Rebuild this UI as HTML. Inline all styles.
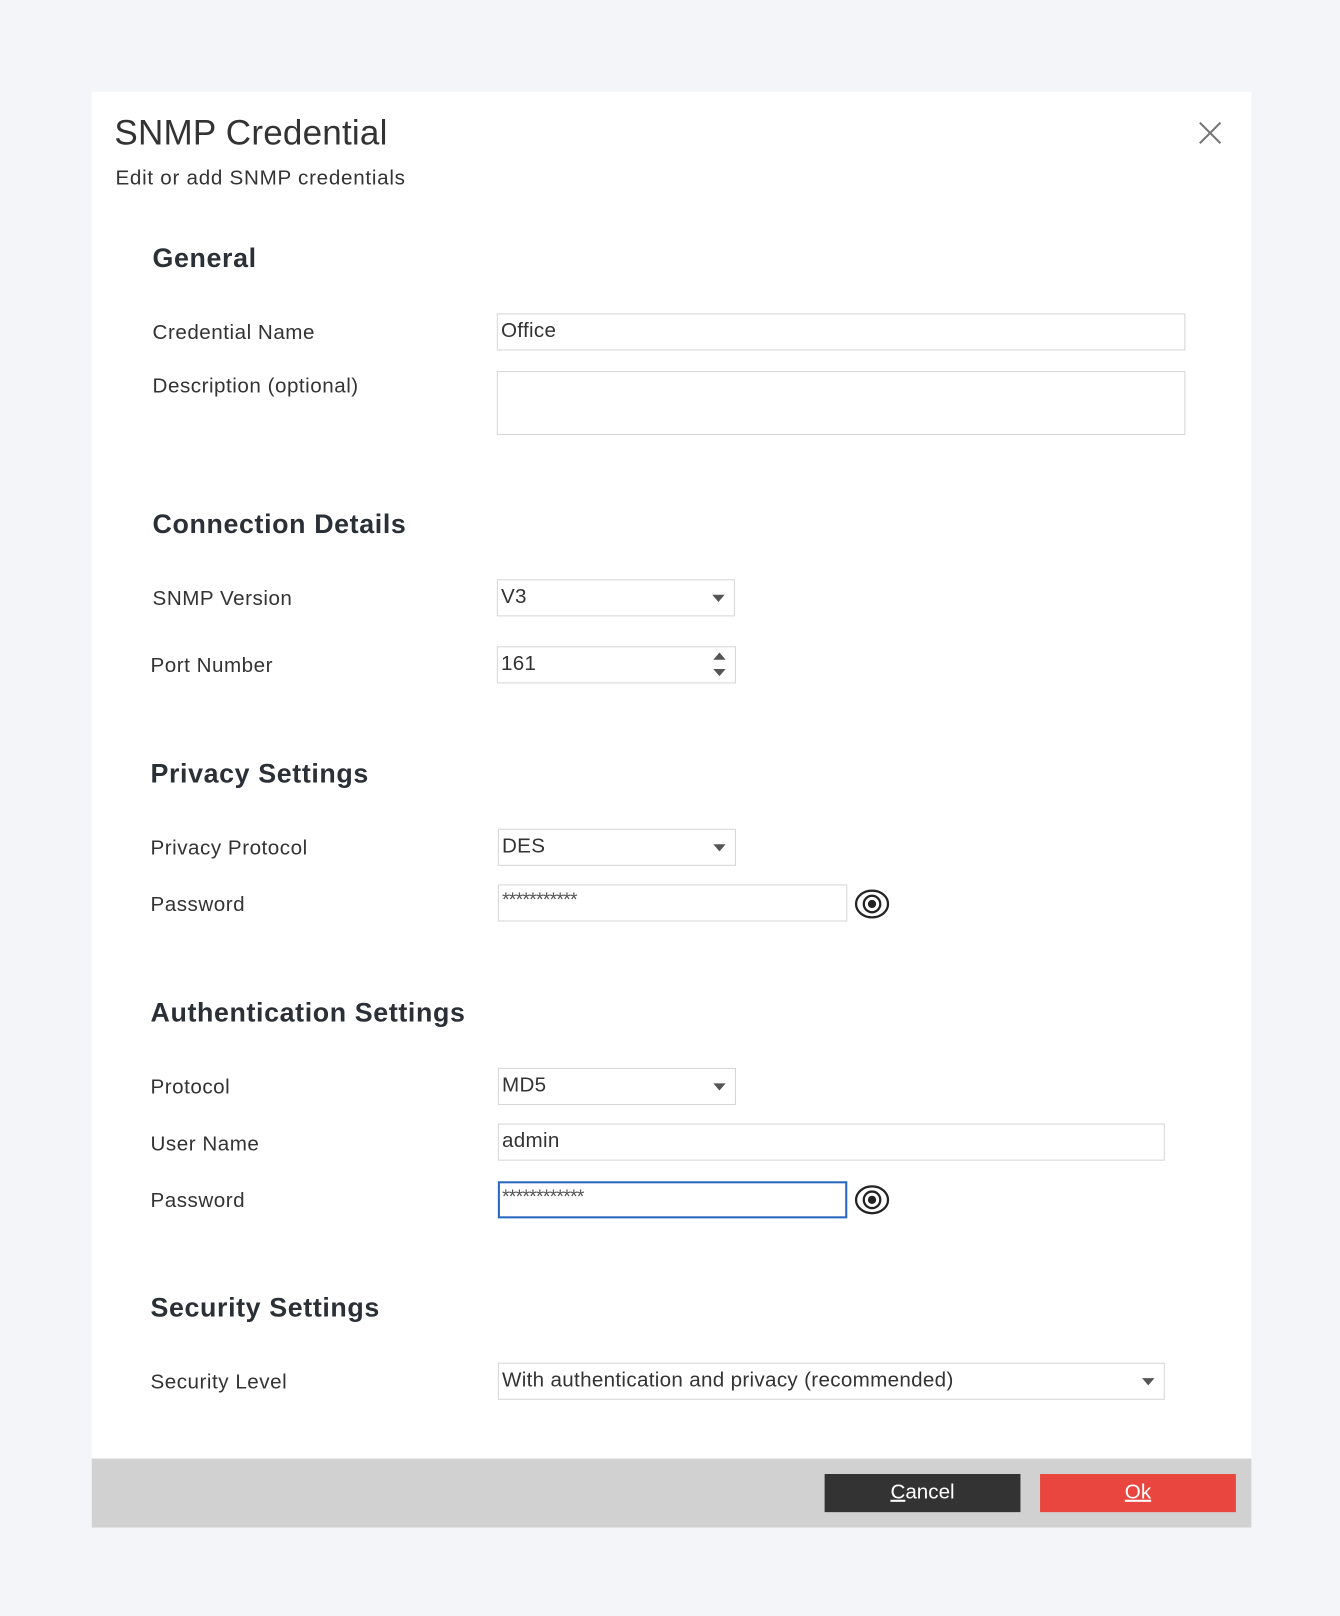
<!DOCTYPE html>
<html><head><meta charset="utf-8"><style>
html,body{margin:0;padding:0;background:#f4f5f9;width:1340px;height:1616px;overflow:hidden}
#w{position:absolute;left:0;top:0;width:1300px;height:1568px;transform:scale(1.03077);transform-origin:0 0;font-family:"Liberation Sans",sans-serif;color:#333}
.a{position:absolute;white-space:nowrap}
.dlg{left:89px;top:89px;width:1125px;height:1393px;background:#fff}
.foot{left:89px;top:1415px;width:1125px;height:67px;background:#d1d1d1}
.h{font-weight:bold;font-size:26px;color:#2b2f36;line-height:30px;letter-spacing:0.6px}
.l{font-size:20px;line-height:24px;color:#333;letter-spacing:0.5px}
.i{border:1px solid #d6d6d6;box-sizing:border-box;background:#fff;font-size:20px;line-height:32px;padding-left:3px;color:#333;letter-spacing:0.3px}
.arr{position:absolute;right:9px;top:14px;width:0;height:0;border-left:6px solid transparent;border-right:6px solid transparent;border-top:7px solid #555}
.pw{font-size:19px;line-height:30px;letter-spacing:-0.8px;color:#555}
.btn{height:37px;top:1430px;width:190px;color:#fff;font-size:20px;line-height:37px;text-align:center}
</style></head><body><div id="w">
<div class="a dlg"></div>
<div class="a foot"></div>
<div class="a" style="left:111px;top:109px;font-size:34px;line-height:40px;color:#333;letter-spacing:0.2px">SNMP Credential</div>
<div class="a" style="left:112px;top:161px;font-size:20px;line-height:24px;color:#333;letter-spacing:0.7px">Edit or add SNMP credentials</div>
<svg class="a" style="left:1163px;top:118px" width="22" height="22"><path d="M1 1L21 21M21 1L1 21" stroke="#777" stroke-width="2"/></svg>

<div class="a h" style="left:148px;top:235px">General</div>
<div class="a l" style="left:148px;top:311px">Credential Name</div>
<div class="a l" style="left:148px;top:363px">Description (optional)</div>
<div class="a i" style="left:482px;top:304px;width:668px;height:36px">Office</div>
<div class="a i" style="left:482px;top:360px;width:668px;height:62px"></div>

<div class="a h" style="left:148px;top:493px">Connection Details</div>
<div class="a l" style="left:148px;top:569px">SNMP Version</div>
<div class="a l" style="left:146px;top:634px">Port Number</div>
<div class="a i" style="left:482px;top:562px;width:231px;height:36px">V3<div class="arr"></div></div>
<div class="a i" style="left:482px;top:627px;width:232px;height:36px">161
<div style="position:absolute;right:9px;top:5px;border-left:6px solid transparent;border-right:6px solid transparent;border-bottom:7px solid #555"></div>
<div style="position:absolute;right:9px;top:21px;border-left:6px solid transparent;border-right:6px solid transparent;border-top:7px solid #555"></div></div>

<div class="a h" style="left:146px;top:735px">Privacy Settings</div>
<div class="a l" style="left:146px;top:811px">Privacy Protocol</div>
<div class="a l" style="left:146px;top:866px">Password</div>
<div class="a i" style="left:483px;top:804px;width:231px;height:36px">DES<div class="arr"></div></div>
<div class="a i pw" style="left:483px;top:858px;width:339px;height:36px">***********</div>
<svg class="a" style="left:828px;top:861px" width="36" height="32" viewBox="0 0 36 32"><ellipse cx="18" cy="16" rx="15.5" ry="13" fill="none" stroke="#222" stroke-width="2.2"/><circle cx="18" cy="16" r="8" fill="none" stroke="#222" stroke-width="2.2"/><circle cx="18" cy="16" r="4" fill="#222"/></svg>

<div class="a h" style="left:146px;top:967px">Authentication Settings</div>
<div class="a l" style="left:146px;top:1043px">Protocol</div>
<div class="a l" style="left:146px;top:1098px">User Name</div>
<div class="a l" style="left:146px;top:1153px">Password</div>
<div class="a i" style="left:483px;top:1036px;width:231px;height:36px">MD5<div class="arr"></div></div>
<div class="a i" style="left:483px;top:1090px;width:647px;height:36px">admin</div>
<div class="a i pw" style="left:483px;top:1146px;width:339px;height:36px;border:2px solid #2a68c0;padding-left:2px;line-height:28px">************</div>
<svg class="a" style="left:828px;top:1148px" width="36" height="32" viewBox="0 0 36 32"><ellipse cx="18" cy="16" rx="15.5" ry="13" fill="none" stroke="#222" stroke-width="2.2"/><circle cx="18" cy="16" r="8" fill="none" stroke="#222" stroke-width="2.2"/><circle cx="18" cy="16" r="4" fill="#222"/></svg>

<div class="a h" style="left:146px;top:1253px">Security Settings</div>
<div class="a l" style="left:146px;top:1329px">Security Level</div>
<div class="a i" style="left:483px;top:1322px;width:647px;height:36px">With authentication and privacy (recommended)<div class="arr"></div></div>

<div class="a btn" style="left:800px;background:#333"><u>C</u>ancel</div>
<div class="a btn" style="left:1009px;background:#e8463f"><u>Ok</u></div>
</div></body></html>
